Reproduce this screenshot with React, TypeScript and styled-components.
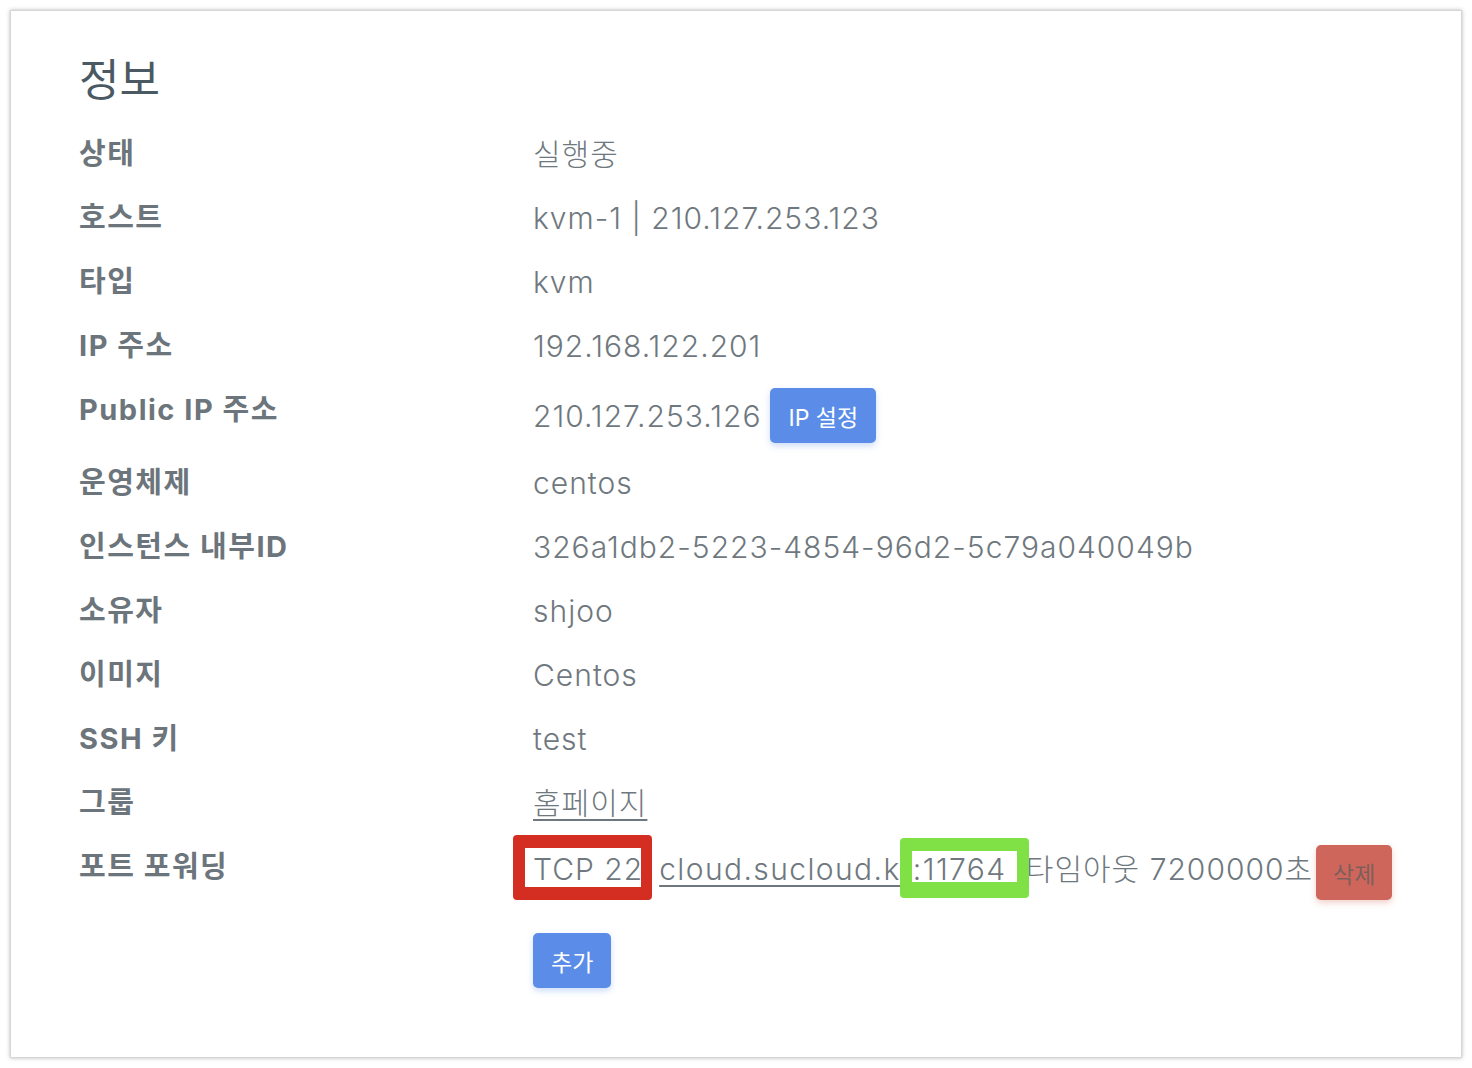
import React from "react";
import styled, { createGlobalStyle } from "styled-components";

const Global = createGlobalStyle`
  html, body { margin: 0; padding: 0; background: #ffffff; }
  body { font-family: Inter, "Noto Sans CJK KR", sans-serif; }
`;

const Page = styled.div`
  padding: 10px;
`;

const Card = styled.section`
  box-sizing: border-box;
  height: 1048px;
  border: 1px solid #d6d6d6;
  box-shadow: 0 0 4px rgba(0, 0, 0, 0.28);
  background: #fff;
  padding: 43px 68px 0 68px;
`;

const Title = styled.h2`
  margin: 0 0 16px 0;
  font-family: Inter, "Noto Sans CJK KR", sans-serif;
  font-weight: 400;
  font-size: 44px;
  line-height: 52px;
  color: #4b5963;
`;

const Grid = styled.div`
  display: grid;
  grid-template-columns: 454px 1fr;
`;

const Label = styled.div`
  padding: 11px 0;
  font-weight: 700;
  font-size: 29px;
  line-height: 42px;
  color: #6c757b;
  letter-spacing: 1.5px;
`;

const Value = styled.div<{ $tight?: boolean }>`
  padding: ${(p) => (p.$tight ? "12px 0 10px" : "11px 0")};
  font-weight: 300;
  font-size: 30px;
  line-height: 42px;
  letter-spacing: 1px;
  color: #6f787e;
  display: flex;
  align-items: center;
  white-space: pre;
`;

const ValueStack = styled.div`
  padding: 10px 0 11px;
  display: flex;
  flex-direction: column;
  align-items: flex-start;
  gap: 33px;
  font-weight: 300;
  font-size: 30px;
  line-height: 42px;
  letter-spacing: 1px;
  color: #6f787e;
`;

const Line = styled.div`
  display: flex;
  align-items: flex-start;
`;

const Segment = styled.span`
  display: block;
  margin-top: 3px;
  white-space: pre;
`;

const Link = styled.a<{ $gap?: boolean }>`
  color: inherit;
  text-decoration: underline;
  text-decoration-thickness: 2px;
  text-underline-offset: 5px;
  position: relative;
  margin-left: ${(p) => (p.$gap ? "16px" : "0")};
  letter-spacing: ${(p) => (p.$gap ? "1.4px" : "1px")};
`;

const Plain = styled.span`
  white-space: pre;
`;

const Button = styled.button<{ $variant: "primary" | "danger" }>`
  flex: none;
  font-family: Inter, "Noto Sans CJK KR", sans-serif;
  font-size: 23px;
  font-weight: 400;
  letter-spacing: 0;
  height: 55px;
  padding: 0 ${(p) => (p.$variant === "danger" ? "17px" : "18px")};
  border: none;
  border-radius: 5px;
  margin-left: ${(p) => (p.$variant === "danger" ? "3px" : "0")};
  background: ${(p) => (p.$variant === "danger" ? "#cf665b" : "#5b8de8")};
  color: ${(p) => (p.$variant === "danger" ? "#7c5f5c" : "#ffffff")};
  box-shadow: 0 3px 6px
    ${(p) => (p.$variant === "danger" ? "rgba(207,102,91,0.3)" : "rgba(91,141,232,0.3)")};
`;

const InlineButton = styled(Button)`
  margin-left: 9px;
  margin-top: -2px;
  margin-bottom: -2px;
`;

const Highlight = styled.span<{
  $color: string;
  $t: number;
  $r: number;
  $b: number;
  $l: number;
  $bw: string;
}>`
  position: relative;
  &::after {
    content: "";
    position: absolute;
    top: ${(p) => p.$t}px;
    right: ${(p) => p.$r}px;
    bottom: ${(p) => p.$b}px;
    left: ${(p) => p.$l}px;
    border: solid ${(p) => p.$color};
    border-width: ${(p) => p.$bw};
    border-radius: 4px;
    pointer-events: none;
  }
`;

const rows: Array<[string, string]> = [
  ["상태", "실행중"],
  ["호스트", "kvm-1 | 210.127.253.123"],
  ["타입", "kvm"],
  ["IP 주소", "192.168.122.201"],
];

const rows2: Array<[string, string]> = [
  ["운영체제", "centos"],
  ["인스턴스 내부ID", "326a1db2-5223-4854-96d2-5c79a040049b"],
  ["소유자", "shjoo"],
  ["이미지", "Centos"],
  ["SSH 키", "test"],
];

export default function App() {
  return (
    <>
      <Global />
      <Page>
        <Card>
          <Title>정보</Title>
          <Grid>
            {rows.map(([k, v]) => (
              <React.Fragment key={k}>
                <Label>{k}</Label>
                <Value>{v}</Value>
              </React.Fragment>
            ))}
            <Label>Public IP 주소</Label>
            <Value $tight>
              <Plain>210.127.253.126</Plain>
              <InlineButton $variant="primary">IP 설정</InlineButton>
            </Value>
            {rows2.map(([k, v]) => (
              <React.Fragment key={k}>
                <Label>{k}</Label>
                <Value>{v}</Value>
              </React.Fragment>
            ))}
            <Label>그룹</Label>
            <Value>
              <Link href="#">홈페이지</Link>
            </Value>
            <Label>포트 포워딩</Label>
            <ValueStack>
              <Line>
                <Segment>
                  <Highlight $color="#d42e22" $t={-16} $r={-9} $b={-13} $l={-20} $bw="13px 11px 13px 12px">
                    TCP 22
                  </Highlight>
                  <Link href="#" $gap>
                    cloud.sucloud.kr
                    <Highlight $color="#7fe146" $t={-13} $r={-13} $b={-11} $l={-13} $bw="13px 12px 16px 12px">
                      :11764{" "}
                    </Highlight>
                  </Link>
                  {" 타임아웃 7200000초"}
                </Segment>
                <Button $variant="danger">삭제</Button>
              </Line>
              <Button $variant="primary">추가</Button>
            </ValueStack>
          </Grid>
        </Card>
      </Page>
    </>
  );
}
